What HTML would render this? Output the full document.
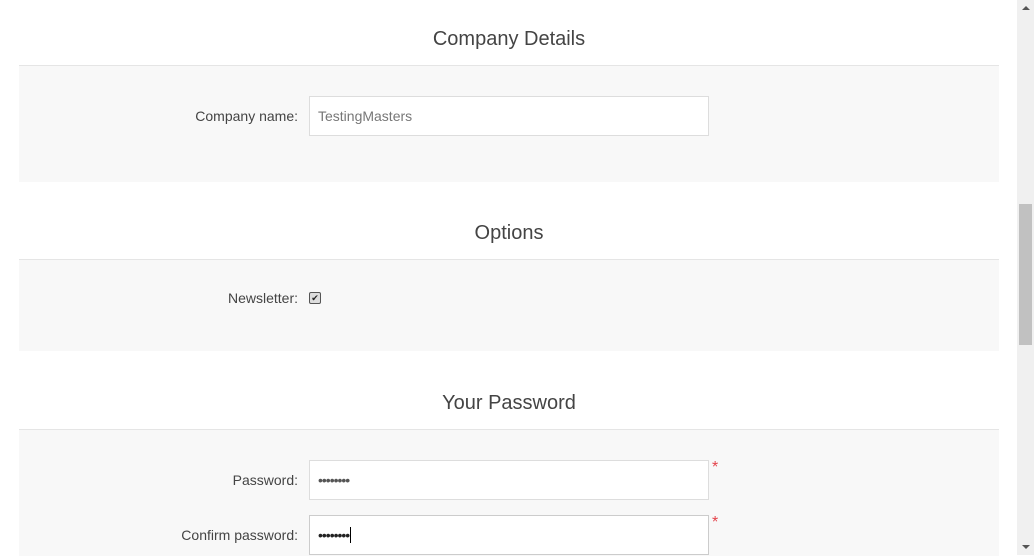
<!DOCTYPE html>
<html><head><style>
body{margin:0;width:1034px;height:555px;overflow:hidden;background:#fff;font-family:"Liberation Sans",Arial,sans-serif;position:relative}
.t{position:absolute;left:19px;width:980px;text-align:center;font-size:20px;color:#444}
.p{position:absolute;left:19px;width:980px;background:#f8f8f8;border-top:1px solid #e5e5e5}
.l{position:absolute;right:736px;font-size:14px;color:#444}
.i{position:absolute;left:309px;background:#fff;border:1px solid #ddd;font-size:14px;color:#777;line-height:38px;padding-left:8px;box-sizing:border-box;width:400px;height:40px}
.s{position:absolute;left:712px;color:#e4434b;font-size:16px}
</style></head><body>
<div class="t" style="top:28px">Company Details</div>
<div class="p" style="top:65px;height:116px"></div>
<div class="l" style="top:108px">Company name:</div>
<div class="i" style="top:96px">TestingMasters</div>
<div class="t" style="top:222px">Options</div>
<div class="p" style="top:259px;height:91px"></div>
<div class="l" style="top:290px">Newsletter:</div>
<div style="position:absolute;left:309px;top:292px;width:10px;height:10px;border:1px solid #555;border-radius:2px;background:#ddd;font-size:9px;line-height:10px;text-align:center;color:#222">✔</div>
<div class="t" style="top:392px">Your Password</div>
<div class="p" style="top:429px;height:126px"></div>
<div class="l" style="top:472px">Password:</div>
<div class="i" style="top:460px;color:#555;letter-spacing:-1px">••••••••</div>
<div class="s" style="top:459px">*</div>
<div class="l" style="top:527px">Confirm password:</div>
<div class="i" style="top:515px;color:#222;border-color:#ccc;letter-spacing:-1px">••••••••<span style="border-left:1px solid #000;margin-left:1px"></span></div>
<div class="s" style="top:514px">*</div>
<div style="position:absolute;left:1017px;top:0;width:17px;height:555px;background:#f0f0f0"></div>
<div style="position:absolute;left:1019px;top:204px;width:13px;height:141px;background:#c1c1c1"></div>
<div style="position:absolute;left:1022px;top:6px;border:4px solid transparent;border-bottom:4px solid #555;border-top:0;width:0"></div>
<div style="position:absolute;left:1022px;top:545px;border:4px solid transparent;border-top:4px solid #555;border-bottom:0;width:0"></div>
</body></html>
